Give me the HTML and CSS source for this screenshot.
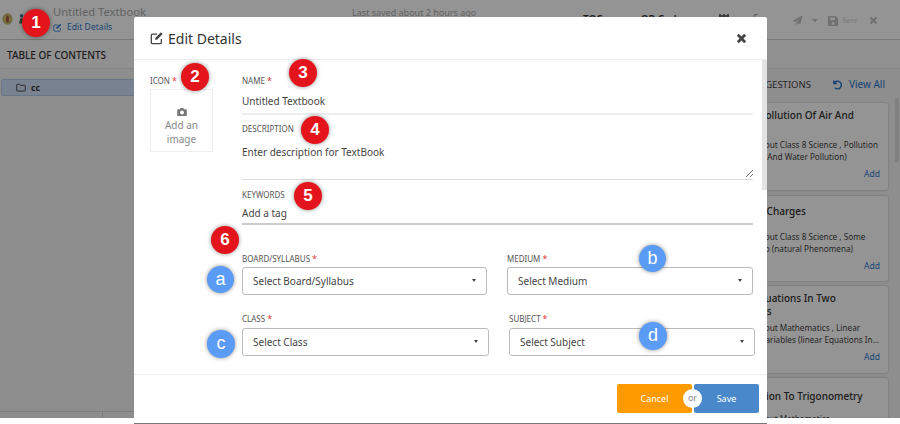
FILE: index.html
```html
<!DOCTYPE html>
<html lang="en">
<head>
<meta charset="utf-8">
<title>Edit Details</title>
<link rel="stylesheet" href="styles.css">
</head>
<body>
<div class="page">
  <header class="topbar">
    <svg class="logo" viewBox="0 0 12 13"><ellipse cx="6" cy="6.500" rx="5.500" ry="6.300" fill="#b9b86a"/><ellipse cx="6" cy="6.500" rx="3.500" ry="4.500" fill="#e0c080"/><path d="M4.500 10V4l1.500-2 1.500 2v6z" fill="#a8553a"/></svg>
    <svg class="logo2" viewBox="0 0 6 13"><circle cx="3" cy="2.500" r="2" fill="#3b6d9c"/><path d="M0 12 2 5h2l2 7z" fill="#3f7a52"/></svg>
    <div class="title-block">
      <div class="book-title">Untitled Textbook</div>
      <div class="edit-link"><svg class="ico-s" viewBox="0 0 16 16"><path d="M13 9v4a1.500 1.500 0 0 1-1.500 1.500H3A1.500 1.500 0 0 1 1.500 13V5A1.500 1.500 0 0 1 3 3.500h5" fill="none" stroke="currentColor" stroke-width="1.500"/><path d="M6 8l6.500-6.500 2 2L8 10H6z" fill="currentColor"/></svg>Edit Details</div>
    </div>
    <div class="saved">Last saved about 2 hours ago</div>
    <div class="top-tabs"><span>TOC</span><span>QR Codes</span>
      <svg class="tab-ico" viewBox="0 0 10 10"><path d="M1 0v4M5 0v4M9 0v4M0 2h10" stroke="currentColor" stroke-width="1.500"/></svg>
      <svg class="tab-plus" viewBox="0 0 10 13"><path d="M1 3a2.500 2.500 0 0 1 4-2" fill="none" stroke="currentColor" stroke-width="1.200"/><path d="M1 8h8M5 4v8" stroke="currentColor" stroke-width="1.400"/></svg>
    </div>
    <div class="top-actions">
      <svg class="send" viewBox="0 0 16 16"><path d="M15.500.500 1 8.500l4 1.800L13 3.500 6.500 11v4l2.500-3 3 1.500z" fill="currentColor"/></svg>
      <i class="caret-top"></i>
      <svg class="disk" viewBox="0 0 14 14"><path d="M1.500 0H10.500L14 3.500V12.500A1.500 1.500 0 0 1 12.500 14H1.500A1.500 1.500 0 0 1 0 12.500V1.500A1.500 1.500 0 0 1 1.500 0ZM3 2V6H10V2ZM7 8.500A2 2 0 1 0 7 12.500 2 2 0 0 0 7 8.500Z" fill="currentColor" fill-rule="evenodd"/></svg>
      <span class="save-word">Save</span>
      <svg class="x-top" viewBox="0 0 12 12"><path d="M2 2l8 8M10 2l-8 8" stroke="currentColor" stroke-width="2.800"/></svg>
    </div>
  </header>
  <div class="workspace">
    <aside class="toc">
      <div class="toc-head">TABLE OF CONTENTS</div>
      <div class="toc-body">
        <div class="toc-row">
          <svg class="folder" viewBox="0 0 14 12"><path d="M1 2.500A1 1 0 0 1 2 1.500h3l1.500 1.500H12a1 1 0 0 1 1 1v6a1 1 0 0 1-1 1H2a1 1 0 0 1-1-1z" fill="none" stroke="currentColor" stroke-width="1.200"/></svg>
          <span>cc</span>
        </div>
      </div>
      <div class="statusbar"><span class="status-cell"></span><span></span></div>
    </aside>
    <aside class="suggest">
      <div class="suggest-strip"></div>
      <div class="suggest-head"><span>SUGGESTIONS</span><span class="view-all"><svg class="undo" viewBox="0 0 12 12"><path d="M2 1.500v3.300h3.300M2.300 4.600A4.200 4.200 0 1 1 3 9.500" fill="none" stroke="currentColor" stroke-width="1.600"/></svg>View All</span></div>
      <div class="cards">
        <div class="card card-1"><h4>Science Pollution Of Air And<br>Water</h4><p>A lesson about Class 8 Science , Pollution<br>Topic Of Air And Water Pollution)</p><div class="add">Add</div></div>
        <div class="card card-2"><h4>Electrical Charges</h4><p>A lesson about Class 8 Science , Some<br>Chapter Two (natural Phenomena)</p><div class="add">Add</div></div>
        <div class="card card-3"><h4>Linear Equations In Two<br>Unknowns</h4><p>A lesson about Mathematics , Linear<br>Class Two Variables (linear Equations In...</p><div class="add">Add</div></div>
        <div class="card card-4"><h4>Introduction To Trigonometry</h4><p>A lesson about Mathematics</p></div>
      </div>
      <div class="side-scroll"></div>
    </aside>
  </div>
</div>

<div class="scrim"></div>

<section class="modal">
  <div class="modal-head">
    <svg class="ico-m" viewBox="0 0 16 16"><path d="M13 9v4a1.500 1.500 0 0 1-1.500 1.500H3A1.500 1.500 0 0 1 1.500 13V5A1.500 1.500 0 0 1 3 3.500h5" fill="none" stroke="currentColor" stroke-width="1.500"/><path d="M6 8l6.500-6.500 2 2L8 10H6z" fill="currentColor"/></svg>
    <h2>Edit Details</h2>
    <svg class="x-modal" viewBox="0 0 12 12"><path d="M2 2l8 8M10 2l-8 8" stroke="currentColor" stroke-width="3"/></svg>
  </div>
  <div class="modal-body">
    <div class="icon-col">
      <div class="lab">ICON<b>*</b></div>
      <div class="image-box">
        <svg class="cam" viewBox="0 0 12 10"><path d="M1 1.500h2.500L4.300 0h3.400l.8 1.500H11a1 1 0 0 1 1 1V9a1 1 0 0 1-1 1H1a1 1 0 0 1-1-1V2.500a1 1 0 0 1 1-1ZM6 3a2.500 2.500 0 1 0 0 5 2.500 2.500 0 0 0 0-5Z" fill="currentColor" fill-rule="evenodd"/></svg>
        <span>Add an<br>image</span>
      </div>
    </div>
    <div class="form-col">
      <div class="lab">NAME<b>*</b></div>
      <div class="val name-val">Untitled Textbook</div>
      <div class="lab desc-lab">DESCRIPTION</div>
      <div class="val desc-val">Enter description for TextBook
        <svg class="grip" viewBox="0 0 7 7"><path d="M7 0 0 7M7 4 4 7" stroke="#777" stroke-width="1"/></svg>
      </div>
      <div class="lab key-lab">KEYWORDS</div>
      <div class="val key-val">Add a tag</div>
      <div class="sel-grid">
        <div class="field"><div class="lab">BOARD/SYLLABUS<b>*</b></div><div class="select">Select Board/Syllabus<i></i></div></div>
        <div class="field"><div class="lab">MEDIUM<b>*</b></div><div class="select">Select Medium<i></i></div></div>
        <div class="field f-class"><div class="lab">CLASS<b>*</b></div><div class="select">Select Class<i></i></div></div>
        <div class="field f-subject"><div class="lab">SUBJECT<b>*</b></div><div class="select">Select Subject<i></i></div></div>
      </div>
    </div>
    <div class="scrollbar"></div>
  </div>
  <div class="modal-foot">
    <div class="btns">
      <div class="btn cancel">Cancel</div>
      <div class="btn save">Save</div>
      <div class="or">or</div>
    </div>
  </div>
</section>

<div class="badge red b1">1</div>
<div class="badge red b2">2</div>
<div class="badge red b3">3</div>
<div class="badge red b4">4</div>
<div class="badge red b5">5</div>
<div class="badge red b6">6</div>
<div class="badge blue ba">a</div>
<div class="badge blue bb">b</div>
<div class="badge blue bc">c</div>
<div class="badge blue bd">d</div>
</body>
</html>
```
FILE: styles.css
```css
* { box-sizing: border-box; }
html, body { margin: 0; height: 424px; overflow: hidden; background: #fff; }
body { font-family: "Noto Sans", "Open Sans", sans-serif; color: #333; position: relative; }

.page { height: 418px; background: #f4f4f4; display: flex; flex-direction: column; overflow: hidden; }
.topbar { height: 40px; flex: none; background: #fff; border-bottom: 1px solid #cfcfcf; display: flex; align-items: flex-start; position: relative; }
.logo { width: 11px; height: 12px; margin: 13px 0 0 2px; flex: none; }
.logo2 { width: 5px; height: 12px; margin: 13px 0 0 6px; flex: none; }
.title-block { margin: 3px 0 0 29px; }
.book-title { font-size: 11.200px; line-height: 18px; color: #aaa; white-space: nowrap; }
.edit-link { font-size: 8.600px; line-height: 12px; color: #2a78d0; display: flex; align-items: center; gap: 5px; white-space: nowrap; }
.ico-s { width: 9px; height: 9px; }
.saved { font-size: 9px; color: #aaa; position: absolute; left: 352px; top: 6px; white-space: nowrap; }
.top-tabs { position: absolute; left: 583px; top: 12px; display: flex; font-size: 10px; font-weight: 600; color: #333; white-space: nowrap; }
.top-tabs span:nth-child(2) { margin-left: 38px; }
.tab-ico { width: 10px; height: 10px; margin: 2px 0 0 32px; color: #555; }
.tab-plus { width: 9px; height: 12px; margin: 2px 0 0 24px; color: #999; }
.top-actions { position: absolute; right: 22px; top: 15px; display: flex; align-items: center; color: #c2c2c2; }
.send { width: 11px; height: 11px; }
.caret-top { width: 0; height: 0; border: 3px solid transparent; border-top: 3px solid #c2c2c2; border-bottom: 0; margin: 0 0 0 9px; }
.disk { width: 10px; height: 10px; margin-left: 10px; }
.save-word { font: 7.500px "Liberation Serif", serif; margin: 0 12px 0 4px; color: #d0d0d0; }
.x-top { width: 9px; height: 9px; }

.workspace { flex: 1; min-height: 0; display: flex; justify-content: space-between; }
.toc { width: 190px; display: flex; flex-direction: column; }
.toc-head { font-size: 10px; font-weight: 500; color: #333; line-height: 30px; height: 29px; flex: none; padding-left: 7px; background: #fafafa; border-bottom: 1px solid #e4e4e4; }
.toc-body { flex: 1; }
.toc-row { margin: 10px 0 0 1px; height: 17px; width: 240px; background: #cfe0fa; border: 1px solid #b5cbe8; border-radius: 2px; display: flex; align-items: center; gap: 5px; padding-left: 14px; font-size: 8.500px; font-weight: 700; }
.folder { width: 10px; height: 9px; flex: none; }
.statusbar { height: 7px; flex: none; width: 134px; border-top: 1px solid #d6d6d6; display: flex; }
.status-cell { width: 103px; border-right: 1px solid #d6d6d6; }
.suggest { width: 185px; position: relative; }
.suggest-strip { height: 29px; background: #fafafa; border-bottom: 1px solid #e4e4e4; }
.suggest-head { height: 34px; display: flex; justify-content: flex-end; align-items: center; gap: 21px; font-size: 9.500px; padding: 0 15px 4px 0; color: #444; }
.view-all { color: #2a78d0; display: flex; align-items: center; gap: 6px; font-size: 10px; }
.undo { width: 11px; height: 11px; }
.cards { display: flex; flex-direction: column; gap: 6px; width: 173px; }
.card { background: #fff; border-radius: 2px; box-shadow: 0 0 2px rgba(0,0,0,.3); padding: 6px 8px 0 6px; font-size: 8.200px; white-space: nowrap; overflow: hidden; flex: none; }
.card h4 { margin: 0; font-size: 10px; line-height: 13px; font-weight: 500; height: 26px; color: #333; }
.card p { margin: 4px 0 0; line-height: 12px; color: #444; }
.add { text-align: right; color: #2a78d0; font-size: 8.500px; line-height: 12px; margin-top: 5px; }
.card-1 { height: 87px; }
.card-2 { height: 85px; margin-bottom: -1px; }
.card-2 h4 { padding-top: 3px; }
.card-2 p { margin-top: 3px; }
.card-3 { height: 87px; margin-bottom: -1px; }
.card-4 { height: 60px; }
.card-4 h4 { padding-top: 6px; }
.card-4 p { margin-top: 3px; }
.side-scroll { position: absolute; right: 1px; top: 58px; width: 4px; height: 64px; background: #dcdcdc; }

.scrim { position: absolute; left: 0; top: 0; width: 900px; height: 418px; background: rgba(0,0,0,.42); }

.modal { position: absolute; left: 134px; top: 17px; width: 633px; height: 407px; background: #fff; display: flex; flex-direction: column; border-radius: 2px 2px 0 0; border-bottom: 1px solid #777; }
.modal-head { height: 43px; flex: none; border-bottom: 1px solid #eee; display: flex; align-items: center; padding: 0 20px 0 16px; color: #333; }
.ico-m { width: 14px; height: 14px; margin-right: 4px; color: #444; }
.modal-head h2 { margin: 0; font-size: 14px; font-weight: 400; flex: 1; }
.x-modal { width: 11px; height: 11px; color: #444; }
.modal-body { height: 315px; flex: none; display: flex; position: relative; padding: 15px 0 0 16px; border-bottom: 1px solid #eee; overflow: hidden; }
.icon-col { width: 92px; flex: none; }
.lab { font-size: 8px; line-height: 12px; color: #555; white-space: nowrap; }
.lab b { color: #e53935; font-weight: 400; font-size: 9px; margin-left: 2px; }
.image-box { width: 63px; height: 63px; margin-top: 2px; border: 1px solid #eee; display: flex; flex-direction: column; align-items: center; color: #888; font-size: 10px; line-height: 13.500px; text-align: center; padding-top: 18px; }
.cam { width: 10px; height: 8px; margin-bottom: 3px; color: #777; }
.form-col { width: 511px; flex: none; }
.val { font-size: 10px; line-height: 13px; color: #444; }
.name-val { margin-top: 8px; height: 20px; border-bottom: 2px solid #eee; }
.desc-lab { margin-top: 8px; }
.desc-val { margin-top: 11px; height: 34px; border-bottom: 1px solid #ddd; position: relative; }
.grip { position: absolute; right: 0; bottom: 2px; width: 7px; height: 7px; }
.key-lab { margin-top: 9px; }
.key-val { margin-top: 6px; height: 18px; border-bottom: 2px solid #ccc; }
.sel-grid { display: grid; grid-template-columns: 245px 246px; column-gap: 20px; margin-top: 28px; }
.select { height: 28px; margin-top: 2px; border: 1px solid #bbb; border-radius: 3px; font-size: 10px; line-height: 26px; padding-left: 10px; color: #444; position: relative; background: #fff; }
.select i { position: absolute; right: 10px; top: 11px; border: 2.500px solid transparent; border-top: 3px solid #444; border-bottom: 0; }
.f-class, .f-subject { margin-top: 18px; }
.f-class .select, .f-subject .select { margin-top: 3px; }
.f-class { width: 247px; }
.f-subject { margin: 18px -2px 0 2px; }
.scrollbar { position: absolute; right: 0; top: 0; width: 5px; height: 130px; background: #e3e3e3; }
.modal-foot { height: 48px; display: flex; justify-content: flex-end; padding: 9px 8px 0 0; }
.btns { position: relative; display: flex; gap: 2px; height: 29px; }
.btn { height: 29px; color: #fff; font-size: 9px; line-height: 29px; text-align: center; border-radius: 2px; }
.cancel { width: 75px; background: #ff9a00; }
.save { width: 65px; background: #4a88cc; }
.or { position: absolute; left: 66px; top: 5px; width: 19px; height: 19px; border-radius: 50%; background: #fff; color: #888; font-size: 9px; line-height: 18px; text-align: center; }

.badge { position: absolute; border-radius: 50%; color: #fff; font-family: "Liberation Sans", sans-serif; text-align: center; box-shadow: 0 0 4px rgba(0,0,0,.45); }
.red { background: #e3141c; width: 28px; height: 28px; font-size: 17px; line-height: 28px; font-weight: 700; }
.blue { background: #5a9bf6; width: 27px; height: 27px; font-size: 18px; line-height: 26px; }
.b1 { left: 22px; top: 9px; }
.b2 { left: 181px; top: 63px; }
.b3 { left: 289px; top: 59px; }
.b4 { left: 301px; top: 116px; }
.b5 { left: 294px; top: 182px; }
.b6 { left: 211px; top: 226px; }
.ba { left: 207px; top: 266px; }
.bb { left: 639px; top: 245px; }
.bc { left: 207px; top: 330px; width: 28px; height: 28px; }
.bd { left: 639px; top: 322px; width: 28px; height: 28px; }
```
